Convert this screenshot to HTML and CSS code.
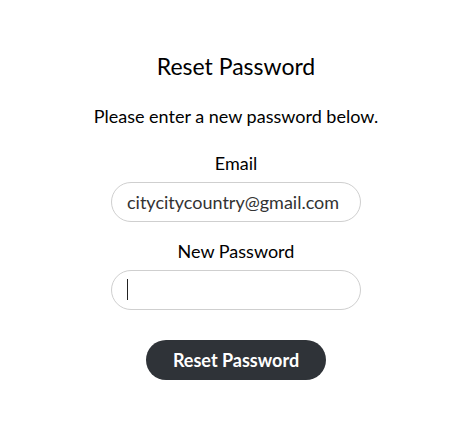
FILE: index.html
```html
<!DOCTYPE html>
<html lang="en">
<head>
<meta charset="utf-8">
<title>Reset Password</title>
<link rel="stylesheet" href="styles.css">
</head>
<body>
<main class="page">
  <h1 class="title">Reset Password</h1>
  <p class="intro">Please enter a new password below.</p>
  <form class="form">
    <label class="label" for="email">Email</label>
    <input class="field" id="email" type="email" value="citycitycountry@gmail.com">
    <label class="label label-second" for="pw">New Password</label>
    <div class="field-wrap">
      <input class="field" id="pw" type="password">
      <span class="caret"></span>
    </div>
    <button class="btn" type="button">Reset Password</button>
  </form>
</main>
</body>
</html>
```

FILE: styles.css
```css
html, body {
  margin: 0;
  padding: 0;
  background: #fff;
}
body {
  font-family: Lato, "Open Sans", sans-serif;
  color: #000;
}
.page {
  display: flex;
  flex-direction: column;
  align-items: center;
  padding-top: 51px;
}
.title {
  margin: 0;
  font-size: 23px;
  line-height: 30px;
  font-weight: 400;
  color: #000;
}
.intro {
  margin: 23px 0 0;
  font-size: 18px;
  line-height: 24px;
}
.form {
  display: flex;
  flex-direction: column;
  align-items: center;
  margin-top: 23px;
}
.label {
  font-size: 18px;
  line-height: 24px;
  margin-bottom: 7px;
}
.label-second {
  margin-top: 17px;
}
.field-wrap {
  position: relative;
}
.field {
  box-sizing: border-box;
  width: 250px;
  height: 40px;
  border: 1px solid #cfcfcf;
  border-radius: 20px;
  padding: 0 15px;
  font-family: Lato, sans-serif;
  font-size: 18px;
  color: #333;
  background: #fff;
  outline: none;
}
.caret {
  position: absolute;
  left: 16px;
  top: 9px;
  width: 1px;
  height: 21px;
  background: #222;
}
.btn {
  margin-top: 30px;
  width: 180px;
  height: 40px;
  border: none;
  border-radius: 20px;
  background: #2f3338;
  color: #fff;
  font-family: Lato, sans-serif;
  font-weight: 700;
  font-size: 18px;
}
```
